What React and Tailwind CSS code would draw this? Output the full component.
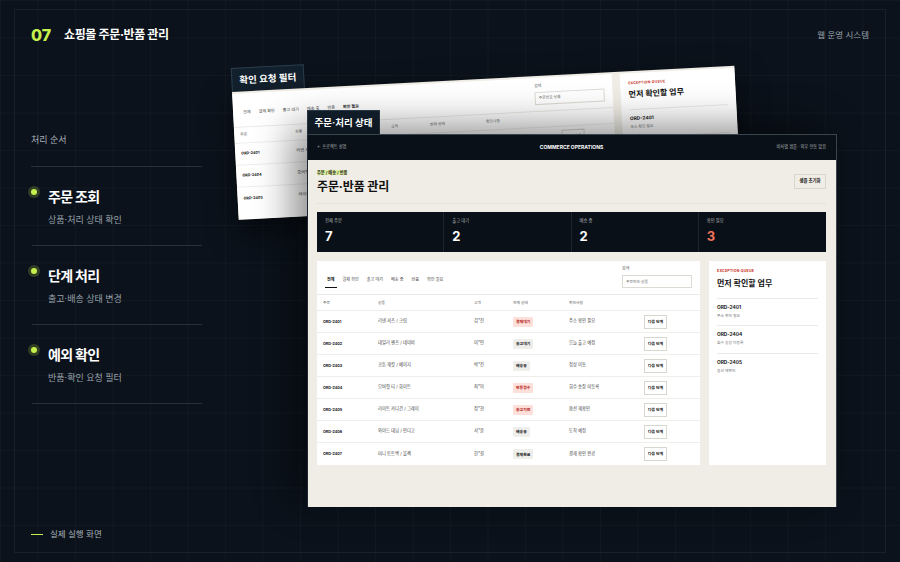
const FONT = "font-['Inter','Noto_Sans_CJK_KR',sans-serif]"

const TABS = ['전체', '결제 확인', '출고 대기', '배송 중', '반품', '확인 필요']

const ORDERS = [
  ['ORD-2401', '리넨 셔츠 / 크림', '김*진', '결제대기', true, '주소 확인 필요'],
  ['ORD-2402', '데일리 팬츠 / 네이비', '이*민', '출고대기', false, '오늘 출고 예정'],
  ['ORD-2403', '코튼 재킷 / 베이지', '박*진', '배송중', false, '정상 이동'],
  ['ORD-2404', '오버핏 티 / 화이트', '최*아', '반품접수', true, '회수 송장 미등록'],
  ['ORD-2405', '라이트 카디건 / 그레이', '정*현', '출고지연', true, '옵션 재확인'],
  ['ORD-2406', '와이드 데님 / 인디고', '서*윤', '배송중', false, '도착 예정'],
  ['ORD-2407', '미니 토트백 / 블랙', '한*길', '결제완료', false, '결제 확인 완료'],
]

const FILTERED = [ORDERS[0], ORDERS[3], ORDERS[4]]

const QUEUE = [
  ['ORD-2401', '주소 확인 필요'],
  ['ORD-2404', '회수 송장 미등록'],
  ['ORD-2405', '옵션 재확인'],
]

const STATS = [
  ['전체 주문', '7', 'text-white'],
  ['출고 대기', '2', 'text-white'],
  ['배송 중', '2', 'text-white'],
  ['확인 필요', '3', 'text-[#f0735a]'],
]

const STEPS = [
  ['주문 조회', '상품·처리 상태 확인'],
  ['단계 처리', '출고·배송 상태 변경'],
  ['예외 확인', '반품·확인 요청 필터'],
]

const COLS = 'grid grid-cols-[55px_96px_39px_56px_75px_1fr] items-center px-[6px]'

function OrderTable({ rows, active }) {
  return (
    <div className="h-full bg-white">
      <div className="flex h-[34px] items-start justify-between border-b border-[#eceae5] pl-[8px] pr-[8px]">
        <div className="mt-[14px] flex gap-[4px] text-[4.1px] text-[#444]">
          {TABS.map((t) => (
            <span
              key={t}
              className={`flex h-[13px] items-start px-[2px] pt-[2px] ${
                t === active ? 'border-b border-[#111] font-bold text-[#111]' : ''
              }`}
            >
              {t}
            </span>
          ))}
        </div>
        <div className="mt-[6px] w-[70px] text-[4px] text-[#555]">
          <div className="h-[8px] leading-[4px]">검색</div>
          <div className="flex h-[13px] items-center border border-[#dedbd5] px-[3px] text-[3.8px] text-[#777]">
            주문번호·상품
          </div>
        </div>
      </div>
      <div className={`${COLS} h-[16px] border-b border-[#f0eeea] text-[3.8px] text-[#666]`}>
        <span>주문</span>
        <span>상품</span>
        <span>고객</span>
        <span>현재 상태</span>
        <span>확인사항</span>
        <span />
      </div>
      {rows.map((r) => (
        <div key={r[0]} className={`${COLS} h-[22px] border-b border-[#f0eeea] text-[4.3px] text-[#444] last:border-b-0`}>
          <span className="text-[3.7px] font-bold text-[#111]">{r[0]}</span>
          <span>{r[1]}</span>
          <span>{r[2]}</span>
          <span>
            <span
              className={`inline-block rounded-[1px] px-[3px] py-[2.5px] text-[3.9px] font-bold leading-[5px] ${
                r[4] ? 'bg-[#fde0da] text-[#b3261e]' : 'bg-[#eeeeeb] text-[#222]'
              }`}
            >
              {r[3]}
            </span>
          </span>
          <span>{r[5]}</span>
          <span className="flex h-[14px] w-[23px] items-center justify-center border border-[#d9d6d0] bg-white text-[3.9px] font-bold text-[#111]">
            다음 단계
          </span>
        </div>
      ))}
    </div>
  )
}

function QueueCard() {
  return (
    <div className="h-full bg-white px-[8px] pt-[8px]">
      <div className="text-[3.6px] font-bold leading-[5px] tracking-[0.06em] text-[#c8321f]">EXCEPTION QUEUE</div>
      <div className="mt-[2.5px] border-b border-[#eceae5] pb-[8px] text-[8px] font-bold leading-[13px] text-[#111]">
        먼저 확인할 업무
      </div>
      {QUEUE.map(([id, note]) => (
        <div key={id} className="h-[27.5px] border-b border-[#eceae5] pt-[5px] last:border-b-0">
          <div className="text-[4.8px] font-bold leading-[7px] text-[#222]">{id}</div>
          <div className="mt-[2px] text-[3.8px] leading-[5px] text-[#777]">{note}</div>
        </div>
      ))}
    </div>
  )
}

function WindowTab({ children, className }) {
  return (
    <div className={`flex h-[24px] items-center justify-center border border-b-0 border-[#2c3d4b] bg-[#13212e] pt-[1px] text-[9.5px] font-bold text-white ${className}`}>
      {children}
    </div>
  )
}

function BackWindow() {
  return (
    <div className="absolute left-[232px] top-[68px] w-[503px] origin-[0px_24px] -rotate-3">
      <WindowTab className="w-[73px]">확인 요청 필터</WindowTab>
      <div className="flex h-[128px] overflow-hidden bg-[#f0ede6] pt-[1.5px] shadow-[0_12px_30px_rgba(0,0,0,0.5)]">
        <div className="w-[380px] shrink-0">
          <OrderTable rows={FILTERED} active="확인 필요" />
        </div>
        <div className="ml-[8px] flex-1">
          <QueueCard />
        </div>
      </div>
    </div>
  )
}

function MainWindow() {
  return (
    <div className="absolute left-[307px] top-[110px] w-[530px]">
      <WindowTab className="w-[73px]">주문·처리 상태</WindowTab>
      <div className="h-[373px] border border-t-[#3a444d] border-r-[#3a444d] border-l-[#1d2731] border-b-0 shadow-[-14px_-8px_36px_rgba(0,0,0,0.45)]">
        <div className="flex h-[25px] items-center justify-between bg-[#0a1017] pl-[9px] pr-[10px] text-[4.2px] text-[#aab0b6]">
          <span className="w-[120px]">← 프로젝트 설명</span>
          <span className="text-[5px] font-bold text-white">COMMERCE OPERATIONS</span>
          <span className="w-[120px] text-right">비식별 샘플 · 외부 연동 없음</span>
        </div>
        <div className="h-[347px] bg-[#f0ede6] pl-[9px] pr-[10px]">
          <div className="flex h-[44px] items-center justify-between border-b border-[#e6e2da]">
            <div className="pt-[1px]">
              <span className="block w-fit bg-[#dcef9a] text-[4.2px] font-bold leading-[5px] text-[#333]">주문 / 배송 / 반품</span>
              <div className="mt-[4px] text-[12px] font-bold leading-[16px] tracking-[-0.01em] text-[#111]">주문·반품 관리</div>
            </div>
            <div className="flex h-[15px] w-[32px] items-center justify-center border border-[#d9d6d0] text-[4.4px] font-bold text-[#111]">
              샘플 초기화
            </div>
          </div>
          <div className="mt-[8px] grid h-[40px] grid-cols-4 bg-[#0a1017]">
            {STATS.map(([label, value, color]) => (
              <div key={label} className="border-r border-[#1b252f] px-[8px] pt-[6px] last:border-r-0">
                <div className="text-[4.3px] leading-[6px] text-[#aab0b6]">{label}</div>
                <div className={`mt-[3px] text-[13px] font-bold leading-[18px] ${color}`}>{value}</div>
              </div>
            ))}
          </div>
          <div className="mt-[9px] flex h-[204px] gap-[9px]">
            <div className="w-[383px] shrink-0">
              <OrderTable rows={ORDERS} active="전체" />
            </div>
            <div className="flex-1">
              <QueueCard />
            </div>
          </div>
        </div>
      </div>
    </div>
  )
}

export default function App() {
  return (
    <div className={`relative flex h-[562px] w-[900px] flex-col overflow-hidden bg-[#0b121b] bg-[linear-gradient(rgba(255,255,255,0.022)_1px,transparent_1px),linear-gradient(90deg,rgba(255,255,255,0.022)_1px,transparent_1px)] bg-[size:37.5px_37.5px] ${FONT}`}>
      <div className="pointer-events-none absolute left-[14px] top-[9px] h-[544px] w-[872px] border border-[#18202a]" />

      <header className="flex h-[70px] items-center justify-between pl-[31px] pr-[31px]">
        <div className="flex items-center">
          <span className="w-[33px] text-[16px] font-extrabold text-[#c6f04d]">07</span>
          <h1 className="text-[12px] font-bold tracking-[-0.03em] text-white">쇼핑몰 주문·반품 관리</h1>
        </div>
        <span className="text-[8.5px] text-[#9aa3ad]">웹 운영 시스템</span>
      </header>

      <aside className="ml-[32px] flex w-[170px] flex-1 flex-col pb-[21px]">
        <div className="-ml-[1px] mt-[57px] flex h-[40px] items-start border-b border-[#272f39] pt-[6px] pl-[1px] text-[9px] leading-[14px] text-[#aab2ba]">
          <span className="-ml-[1px]">처리 순서</span>
        </div>
        {STEPS.map(([title, sub]) => (
          <div key={title} className="relative h-[79px] border-b border-[#272f39] pl-[16px] pt-[19px]">
            <span className="absolute left-[-1px] top-[22px] h-[6px] w-[6px] rounded-full bg-[#c6f04d] shadow-[0_0_0_3px_rgba(198,240,77,0.2)]" />
            <div className="text-[14px] font-bold leading-[21px] tracking-[-0.05em] text-white">{title}</div>
            <div className="mt-[6px] text-[9px] leading-[14px] text-[#98a1aa]">{sub}</div>
          </div>
        ))}
        <div className="-ml-[1px] mt-auto flex items-center gap-[7px] text-[8.5px] leading-[14px] text-[#aab2ba]">
          <span className="h-px w-[12px] bg-[#c6f04d]" />
          실제 실행 화면
        </div>
      </aside>

      <BackWindow />
      <MainWindow />
    </div>
  )
}
